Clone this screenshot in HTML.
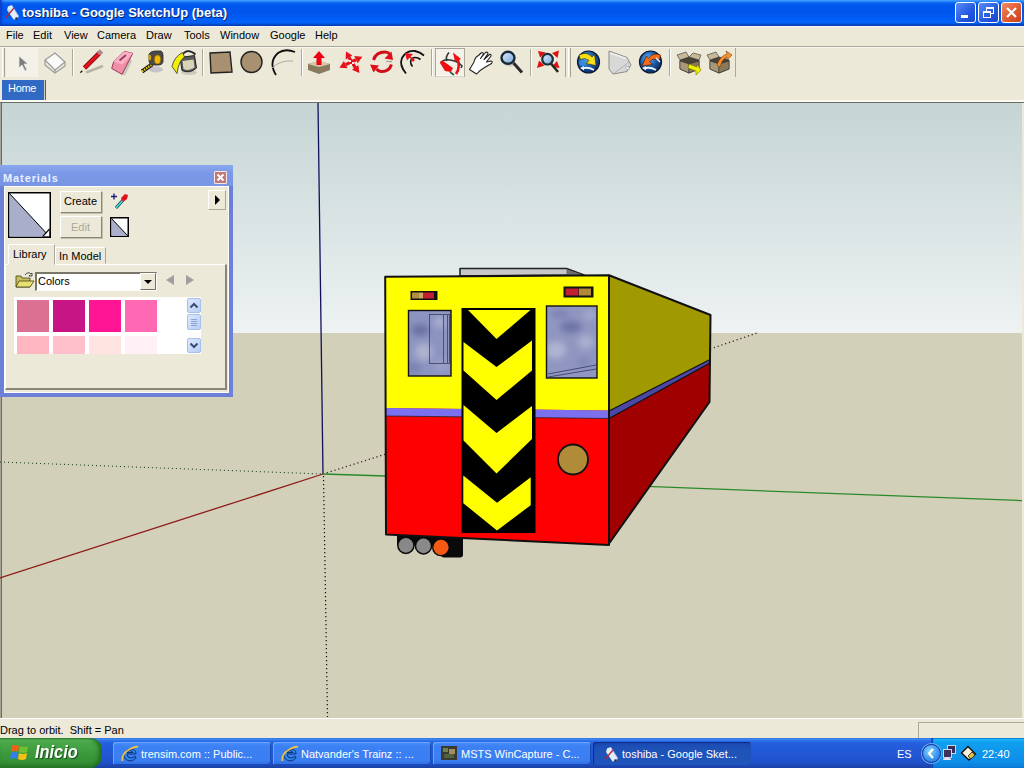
<!DOCTYPE html>
<html><head><meta charset="utf-8">
<style>
*{margin:0;padding:0;box-sizing:border-box}
html,body{width:1024px;height:768px;overflow:hidden;background:#ece9d8;font-family:"Liberation Sans",sans-serif;font-size:11px;color:#000}
.a{position:absolute}
#title{left:0;top:0;width:1024px;height:26px;background:linear-gradient(#3f9bff 0px,#3a93ff 1px,#1a78f8 2px,#0a62ee 3px,#0058ee 5px,#0055ea 12px,#005af2 17px,#0063fa 21px,#0060f6 23px,#0050d8 24px,#0040b0 25.5px,#0038a8 26px)}
#title .t{left:22px;top:5px;color:#fff;font-weight:bold;font-size:13px;white-space:nowrap;text-shadow:1px 1px 0 #0a246a}
.wb{top:2px;width:21px;height:21px;border:1px solid #fff;border-radius:3px;background:linear-gradient(135deg,#5b8ef7,#2358e0 60%,#1a48c8)}
.menu{top:29px;white-space:nowrap}
.sep{width:2px;height:26px;border-left:1px solid #aca899;border-right:1px solid #fff}
</style></head><body>
<div id="title" class="a">
  <div class="a" style="left:0;top:0;width:4px;height:26px;background:linear-gradient(90deg,#0a3cc8,rgba(0,88,238,0))"></div>
  <svg class="a" style="left:3px;top:3px" width="16" height="18" viewBox="0 0 16 18">
    <path d="M5 3.5 L8.5 2 L15.5 13 L14 16 L10.5 16.5 L4 7 Z" fill="#e4ecfa"/>
    <path d="M8.5 2 L15.5 13 L14 16" fill="none" stroke="#a8c0e8" stroke-width="1"/>
    <path d="M4.5 6.5 L8 9.5" stroke="#8aa8e0" stroke-width="1" opacity="0.7"/>
    <path d="M3 14.5 L11 5" stroke="#b02838" stroke-width="1.3"/>
    <circle cx="13.5" cy="15.5" r="1.3" fill="#303040"/>
  </svg>
  <div class="a t">toshiba - Google SketchUp (beta)</div>
  <div class="a wb" style="left:955px"><div class="a" style="left:5px;top:12px;width:7px;height:3px;background:#fff"></div></div>
  <div class="a wb" style="left:978px"><div class="a" style="left:7px;top:4px;width:8px;height:7px;border:1px solid #fff;border-top-width:2px"></div><div class="a" style="left:4px;top:8px;width:8px;height:7px;border:1px solid #fff;border-top-width:2px;background:#2a60e0"></div></div>
  <div class="a wb" style="left:1001px;background:linear-gradient(135deg,#f08a64,#e05a30 55%,#c84020)">
    <svg class="a" style="left:3px;top:3px" width="13" height="13" viewBox="0 0 13 13"><path d="M2 2 L11 11 M11 2 L2 11" stroke="#fff" stroke-width="2.2"/></svg>
  </div>
</div>
<!-- menu -->
<div class="a" style="left:0;top:26px;width:1024px;height:1px;background:#f6f6fa"></div>
<div class="a menu" style="left:6px">File</div>
<div class="a menu" style="left:33px">Edit</div>
<div class="a menu" style="left:64px">View</div>
<div class="a menu" style="left:97px">Camera</div>
<div class="a menu" style="left:146px">Draw</div>
<div class="a menu" style="left:184px">Tools</div>
<div class="a menu" style="left:220px">Window</div>
<div class="a menu" style="left:270px">Google</div>
<div class="a menu" style="left:315px">Help</div>
<div class="a" style="left:0;top:46px;width:1024px;height:1px;background:#aca899"></div>
<div class="a" style="left:0;top:47px;width:1024px;height:1px;background:#f8f6ee"></div>

<!-- toolbar -->
<svg class="a" style="left:0;top:47px" width="1024" height="32" viewBox="0 47 1024 32">
  <defs>
    <radialGradient id="glb" cx="0.4" cy="0.35" r="0.7"><stop offset="0" stop-color="#6ab4f0"/><stop offset="0.5" stop-color="#1c5fb0"/><stop offset="1" stop-color="#0a2050"/></radialGradient>
    <linearGradient id="mag" x1="0" y1="0" x2="1" y2="1"><stop offset="0" stop-color="#d8ecff"/><stop offset="1" stop-color="#7aa8d8"/></linearGradient>
  </defs>
  <!-- grippers -->
  <line x1="2.5" y1="48" x2="2.5" y2="77" stroke="#fff"/>
  <line x1="4.5" y1="48" x2="4.5" y2="77" stroke="#a8a490"/>
  <!-- select (pressed-ish area) -->
  <rect x="6" y="48" width="32" height="29" fill="#f3f1e8"/>
  <path d="M19 56 L19 68 L22 65 L25 71 L27 70 L24 64 L28 64 Z" fill="#7c7c7c" stroke="#e8e8e8" stroke-width="0.8"/>
  <!-- component -->
  <g stroke="#9a9a9a" stroke-width="1.2" fill="none">
    <path d="M45 60 L55 53 L65 62 L55 70 Z" fill="#fafafa"/>
    <path d="M45 60 L45 65 L55 73 L65 66 L65 62"/>
    <path d="M55 70 L55 73"/>
  </g>
  <!-- sep -->
  <line x1="72.5" y1="49" x2="72.5" y2="76" stroke="#aca899"/>
  <line x1="73.5" y1="49" x2="73.5" y2="76" stroke="#fff"/>
  <!-- pencil -->
  <path d="M86 72.5 L103 66" stroke="#aaa69a" stroke-width="2.5" opacity="0.8"/>
  <path d="M84.5 68 L99.5 53" stroke="#801010" stroke-width="4.6"/>
  <path d="M84.5 68 L99.5 53" stroke="#e81020" stroke-width="3"/>
  <path d="M98.5 54 L101.5 51" stroke="#b08888" stroke-width="4.6"/>
  <path d="M79.8 73.3 L82.6 67.4 L85.8 70.4 Z" fill="#f0e4c8"/>
  <path d="M79.8 73.3 L81.2 70.3 L82.8 71.8 Z" fill="#111"/>
  <!-- eraser -->
  <path d="M128 57 L132 61 L125 75.5 L121 74.5 Z" fill="#b0aca4" opacity="0.6"/>
  <path d="M124.4 51.4 L132.8 53.3 L122 74.3 L111.7 68.5 L113.6 61.8 Z" fill="#f090a8" stroke="#903050" stroke-width="0.9" stroke-linejoin="round"/>
  <path d="M113.6 61.8 L124.4 51.4 L132.8 53.3 L122.5 64.5 Z" fill="#ffb0c4"/>
  <path d="M119.5 60.5 L126 55" stroke="#904060" stroke-width="1.8"/>
  <!-- tape -->
  <ellipse cx="156" cy="69.5" rx="7" ry="3" fill="#b8b2c8" opacity="0.7"/>
  <path d="M142 71.5 L152 64.5" stroke="#111" stroke-width="4"/>
  <path d="M142 71.5 L152 64.5" stroke="#e8d020" stroke-width="2.4" stroke-dasharray="1.5 1"/>
  <path d="M149 54 Q151 51 155 51 L161 51 Q163 52 163 55 L163 62 Q162 65 159 65 L152 65 Q149 64 149 61 Z" fill="#4a4a4a" stroke="#2a2a2a" stroke-width="0.8"/>
  <ellipse cx="157.5" cy="59.5" rx="3.2" ry="4.5" fill="#f0b800" stroke="#805000" stroke-width="0.5"/>
  <ellipse cx="149.8" cy="57.5" rx="1.4" ry="3" fill="#d0a000"/>
  <!-- paint bucket -->
  <ellipse cx="189" cy="72.5" rx="8" ry="2.5" fill="#c4c0b4" opacity="0.8"/>
  <path d="M180 57.5 L194.5 55.5 L196.5 68 Q190 74 182 70.5 Z" fill="#5a5a58" stroke="#222" stroke-width="1"/>
  <path d="M182.5 61 L193.5 59.5 L194.5 67.5 Q189 71.5 183.5 69 Z" fill="#d8d4b8"/>
  <path d="M181.5 56 Q187 47 195.5 54.5" fill="none" stroke="#222" stroke-width="1.7"/>
  <path d="M172 66.5 Q174 57 182.5 52.5 L184.5 57 Q178.5 61 177 73.5 Z" fill="#f0f000" stroke="#333" stroke-width="0.8"/>
  <!-- sep -->
  <line x1="202.5" y1="49" x2="202.5" y2="76" stroke="#aca899"/>
  <line x1="203.5" y1="49" x2="203.5" y2="76" stroke="#fff"/>
  <!-- rect -->
  <path d="M210 53 L230 52 L232 72 L211 73 Z" fill="#a89070" stroke="#222" stroke-width="1.4"/>
  <!-- circle -->
  <circle cx="251.5" cy="62" r="10.5" fill="#a89070" stroke="#222" stroke-width="1.4"/>
  <!-- arc -->
  <path d="M276 75 Q268 62 278 53 Q285 48 295 52" fill="none" stroke="#111" stroke-width="1.8"/>
  <path d="M272 68 Q280 60 293 61" fill="none" stroke="#aaa" stroke-width="1"/>
  <!-- sep -->
  <line x1="301.5" y1="49" x2="301.5" y2="76" stroke="#aca899"/>
  <line x1="302.5" y1="49" x2="302.5" y2="76" stroke="#fff"/>
  <!-- push/pull -->
  <path d="M308 64 L319 61 L330 64 L330 70 L319 74 L308 70 Z" fill="#8a7a60"/>
  <path d="M308 64 L319 61 L330 64 L319 67 Z" fill="#d8c8a8"/>
  <path d="M319 51 L325 58 L321.5 58 L321.5 65 L316.5 65 L316.5 58 L313 58 Z" fill="#f00010"/>
  <!-- move -->
  <g fill="#e8101a">
    <path d="M346 51.5 L352.4 55.4 L345.6 59.6 Z"/>
    <path d="M362.3 56.7 L357.7 63.3 L354.3 56.1 Z"/>
    <path d="M339.4 67.7 L347.5 68.2 L343.9 61 Z"/>
    <path d="M359.4 73 L358.4 65 L352 69.8 Z"/>
  </g>
  <path d="M349 57.5 L355.5 68 M356 59.7 L345.7 64.6" stroke="#e8101a" stroke-width="3.2"/>
  <g fill="#fbe8e8"><rect x="349" y="60" width="2" height="2"/><rect x="352" y="62" width="2" height="2"/><rect x="350" y="64" width="2" height="2"/></g>
  <!-- rotate -->
  <path d="M373.5 60 Q376 52 385 52 Q388 52 389.5 54" fill="none" stroke="#d01018" stroke-width="3"/>
  <path d="M393 60 L384.5 58.5 L391.5 51.5 Z" fill="#e01018"/>
  <path d="M386 61 Q390 62 392 61.5" fill="none" stroke="#9a9a9a" stroke-width="1.2"/>
  <path d="M391.5 64.5 Q389 72 381 71.5 Q378 71 376.5 69" fill="none" stroke="#d01018" stroke-width="3"/>
  <path d="M370 64.5 L379 65.5 L373.5 72.5 Z" fill="#e01018"/>
  <!-- offset -->
  <path d="M406 73.5 Q399 65 402 58 Q406 50 415 51 Q420 52 424 55.5" fill="none" stroke="#111" stroke-width="1.8"/>
  <path d="M412.5 66.5 Q409 62 412 58.5 Q416 56 420.5 59.5" fill="none" stroke="#111" stroke-width="1.6"/>
  <path d="M405 53 L413 54 L407 60.5 Z" fill="#e8101a"/><path d="M408 55 L415 60 L413 62 Z" fill="#e8101a"/>
  <!-- sep -->
  <line x1="431.5" y1="49" x2="431.5" y2="76" stroke="#aca899"/>
  <line x1="432.5" y1="49" x2="432.5" y2="76" stroke="#fff"/>
  <!-- orbit pressed -->
  <rect x="435.5" y="48.5" width="29" height="28" fill="#f4f2e8" stroke="#aca899"/>
  <line x1="436" y1="76" x2="464" y2="76" stroke="#fff"/>
  <path d="M449 52.5 Q445 57 447 61" fill="none" stroke="#333" stroke-width="1.6"/>
  <path d="M441 63 Q443 59 450 60 Q458 61 462 66 L461 68" fill="none" stroke="#333" stroke-width="1.5"/>
  <path d="M450 72 L454 75" stroke="#2a6050" stroke-width="1.6"/>
  <path d="M440 63 Q440 60 443 61 L453 68 L451 72 L445 71 Z" fill="#ee1010"/>
  <path d="M456 74 Q461 67 457 57" fill="none" stroke="#ee1010" stroke-width="2.6"/>
  <path d="M453 52.5 L461 59 L455 62 Z" fill="#ee1010"/>
  <!-- pan hand -->
  <path d="M469.5 69.5 L474 62 Q475 57 478.5 55.5 L481 53 Q483 52 483.5 54 L480.5 58.5 L485.5 52.5 Q487.5 51.5 488 53.5 L484 59.5 L489.5 54.5 Q491.5 54 491 56 L486.5 62 L491 61 Q493 61.5 491.5 63.5 L484.5 67.5 Q479.5 70.5 476.5 74 Z" fill="#fff" stroke="#222" stroke-width="1.1" stroke-linejoin="round"/>
  <!-- zoom -->
  <ellipse cx="510" cy="64" rx="6" ry="2.5" fill="#c8c4b4" opacity="0.7"/>
  <line x1="513.5" y1="63" x2="522" y2="72.5" stroke="#2a2a2a" stroke-width="3"/>
  <ellipse cx="508" cy="57.8" rx="6.5" ry="6" fill="url(#mag)" stroke="#1a2a38" stroke-width="2.4"/>
  <!-- sep -->
  <line x1="530.5" y1="49" x2="530.5" y2="76" stroke="#aca899"/>
  <line x1="531.5" y1="49" x2="531.5" y2="76" stroke="#fff"/>
  <!-- zoom extents -->
  <g fill="#e01010"><path d="M538 51 L546 52.5 L540 57.5 Z"/><path d="M559 50.5 L557.5 58 L552 53 Z"/><path d="M537 68 L539 60.5 L544.5 65.5 Z"/><path d="M559.5 68 L551.5 67 L557 61 Z"/></g>
  <line x1="551" y1="63.5" x2="558" y2="72" stroke="#2a2a2a" stroke-width="2.6"/>
  <circle cx="547.5" cy="59.2" r="5.3" fill="url(#mag)" stroke="#1a3038" stroke-width="2.2"/>
  <!-- end toolbar 1 -->
  <line x1="565.5" y1="48" x2="565.5" y2="77" stroke="#aca899"/>
  <line x1="568.5" y1="48" x2="568.5" y2="77" stroke="#fff"/>
  <line x1="570.5" y1="48" x2="570.5" y2="77" stroke="#a8a490"/>
  <!-- globe 1 -->
  <circle cx="588.5" cy="62" r="11" fill="url(#glb)" stroke="#0a1830" stroke-width="1.2"/>
  <ellipse cx="583" cy="63" rx="4" ry="3" fill="#3a90e0" opacity="0.8"/>
  <path d="M579 55 Q587 51 592 57 L594.5 54.5 L596 65.5 L586 63.5 L589 60.5 Q585 57 580.5 59.5 Z" fill="#f8e010" stroke="#302800" stroke-width="0.6"/>
  <path d="M582 68.5 Q588 66.5 594 70" stroke="#e8f4ff" stroke-width="1.8" fill="none"/>
  <path d="M580 68 L584 66 L584 70.5 Z" fill="#e8f4ff"/>
  <!-- share sheet -->
  <path d="M609 51 L627 57.5 L631 65 L627 71.5 L613 74 L609 69 Z" fill="#d8d8d8" stroke="#8a8a8a" stroke-width="1"/>
  <path d="M613 74 L629 62" stroke="#a8a8a8" stroke-width="0.8"/>
  <path d="M610 53 L626 58.5" stroke="#f0f0f0" stroke-width="1.5"/>
  <rect x="626" y="66.5" width="3" height="3" fill="#f4f4f4" stroke="#999" stroke-width="0.6"/>
  <!-- globe 2 -->
  <circle cx="650.5" cy="62" r="11" fill="url(#glb)" stroke="#0a1830" stroke-width="1.2"/>
  <path d="M660.5 55 Q653 52 648.5 58.5 L646.5 56 L642 66 L652.5 64.5 L649.5 61.5 Q653.5 57.5 659.5 60 Z" fill="#f86a18" stroke="#401800" stroke-width="0.6"/>
  <path d="M656 58 L660 62" stroke="#f0f8ff" stroke-width="1.4"/>
  <path d="M644 68.5 Q650 66.5 656 70" stroke="#e8f4ff" stroke-width="1.8" fill="none"/>
  <path d="M642 68 L646 66 L646 70.5 Z" fill="#e8f4ff"/>
  <!-- sep -->
  <line x1="669.5" y1="49" x2="669.5" y2="76" stroke="#aca899"/>
  <line x1="670.5" y1="49" x2="670.5" y2="76" stroke="#fff"/>
  <!-- box 1 -->
  <path d="M680 60 L689 57 L699 60 L699 69 L689 73 L680 69 Z" fill="#4a4232" stroke="#333" stroke-width="0.8"/><path d="M680 61 L689 64 L689 73 L680 69 Z" fill="#a89878" stroke="#333" stroke-width="0.6"/><path d="M689 64 L699 61 L699 69 L689 73 Z" fill="#8a7a5a" stroke="#333" stroke-width="0.6"/>
  <path d="M677 55 L686 52 L689 57 L680 60 Z" fill="#c8b898" stroke="#333" stroke-width="0.6"/>
  <path d="M689 57 L693 53 L701 55 L699 60 Z" fill="#c8b898" stroke="#333" stroke-width="0.6"/>
  <path d="M689 64 L697 67 L697 64 L701 70 L696 75 L696 71 L688 68 Z" fill="#f0f000" stroke="#707000" stroke-width="0.6"/>
  <!-- box 2 -->
  <path d="M710 60 L719 57 L729 60 L729 69 L719 73 L710 69 Z" fill="#4a4232" stroke="#333" stroke-width="0.8"/><path d="M710 61 L719 64 L719 73 L710 69 Z" fill="#a89878" stroke="#333" stroke-width="0.6"/><path d="M719 64 L729 61 L729 69 L719 73 Z" fill="#8a7a5a" stroke="#333" stroke-width="0.6"/>
  <path d="M707 55 L716 52 L719 57 L710 60 Z" fill="#c8b898" stroke="#333" stroke-width="0.6"/>
  <path d="M717 65 Q720 56 727 54 L726 51 L732 55 L727 60 L727 57 Q722 59 720 67 Z" fill="#f89030" stroke="#804000" stroke-width="0.6"/>
  <!-- end -->
  <line x1="735.5" y1="48" x2="735.5" y2="77" stroke="#aca899"/>
</svg>
<!-- Home tab bar -->
<div class="a" style="left:2px;top:80px;width:42px;height:20px;background:#316ac5;box-shadow:1px 0 0 #d0ccc0,2px 0 0 #5e5c54,2px 1px 0 #5e5c54"></div>
<div class="a" style="left:8px;top:82px;color:#fff;font-size:11px;letter-spacing:-0.3px">Home</div>
<div class="a" style="left:0;top:100px;width:1024px;height:2px;background:#fafaf2"></div>
<div class="a" style="left:0;top:102px;width:1024px;height:1px;background:#6b6f68"></div>

<!-- viewport -->
<svg class="a" style="left:0;top:103px" width="1024" height="616" viewBox="0 103 1024 616">
  <defs>
    <filter id="blur3" x="-20%" y="-20%" width="140%" height="140%"><feGaussianBlur stdDeviation="3"/></filter>
    <clipPath id="cw1"><rect x="409" y="311" width="41.5" height="64.5"/></clipPath>
    <clipPath id="cw2"><rect x="547" y="306.5" width="49.5" height="71"/></clipPath>
    <linearGradient id="sky" x1="0" y1="0" x2="0" y2="1"><stop offset="0" stop-color="#c5d5d4"/><stop offset="1" stop-color="#eef2f3"/></linearGradient>
    <linearGradient id="glass" x1="0" y1="0" x2="0.6" y2="1"><stop offset="0" stop-color="#8a92c0"/><stop offset="0.25" stop-color="#7880b0"/><stop offset="0.5" stop-color="#a2a8cc"/><stop offset="0.8" stop-color="#8c92bc"/><stop offset="1" stop-color="#9aa0c8"/></linearGradient>
    <linearGradient id="glass2" x1="0" y1="0" x2="0.5" y2="1"><stop offset="0" stop-color="#8890c0"/><stop offset="0.3" stop-color="#a8b0d0"/><stop offset="0.55" stop-color="#8e96c0"/><stop offset="0.8" stop-color="#b0b6d4"/><stop offset="1" stop-color="#9098c4"/></linearGradient>
  </defs>
  <rect x="0" y="103" width="1022" height="230" fill="url(#sky)"/>
  <rect x="0" y="333" width="1022" height="385" fill="#d2d0b9"/>
  <rect x="0" y="103" width="1" height="615" fill="#a8a498"/><rect x="1" y="103" width="1" height="615" fill="#6b6b60"/>
  <rect x="1022" y="103" width="2" height="615" fill="#ece9d8"/>
  <!-- axes -->
  <line x1="318" y1="103" x2="323" y2="474" stroke="#10105e" stroke-width="1.3"/>
  <line x1="323.5" y1="476" x2="327.5" y2="717" stroke="#111" stroke-width="1.2" stroke-dasharray="1.2 2.8"/>
  <line x1="0" y1="578" x2="323" y2="474" stroke="#8e1a1a" stroke-width="1.3"/>
  <line x1="323" y1="474" x2="386" y2="454" stroke="#3a2222" stroke-width="1.3" stroke-dasharray="1.2 2.8"/>
  <line x1="710" y1="349" x2="757" y2="333" stroke="#3a2222" stroke-width="1.3" stroke-dasharray="1.2 2.8"/>
  <line x1="0" y1="462" x2="323" y2="474" stroke="#2a4a2a" stroke-width="1.1" stroke-dasharray="1.1 2.9"/>
  <line x1="323" y1="474" x2="386" y2="476" stroke="#2a8a2a" stroke-width="1.3"/>
  <line x1="640" y1="486.2" x2="1022" y2="500.6" stroke="#2a8a2a" stroke-width="1.3"/>
  <!-- bumpers -->
  <path d="M397 535 L463 537 L463 546 L397 545 Z" fill="#0a0a0a"/>
  <rect x="441" y="537" width="22" height="20.5" rx="3" fill="#0a0a0a"/>
  <circle cx="405.9" cy="545.4" r="8.8" fill="#0a0a0a"/>
  <circle cx="423.5" cy="545.9" r="8.8" fill="#0a0a0a"/>
  <circle cx="441" cy="547.3" r="9" fill="#0a0a0a"/>
  <circle cx="405.9" cy="545.4" r="7.3" fill="#888888"/>
  <circle cx="423.5" cy="545.9" r="7.3" fill="#8a8a8a"/>
  <circle cx="441" cy="547.3" r="7.6" fill="#f55a14"/>
  <!-- roof -->
  <path d="M460 276 L460 268.5 L566.5 268.5 L584 275 Z" fill="#c8c8c8" stroke="#222" stroke-width="1.6" stroke-linejoin="round"/>
  <path d="M566.5 269.5 L582 274.5 L566.5 275.5 Z" fill="#6e6e72"/>
  <!-- side face -->
  <path d="M609 275.3 L710.5 315 L709.5 402 L608 545 Z" fill="#a00000"/>
  <path d="M609 275.3 L710.5 315 L710 360 L609 411 Z" fill="#a09a00"/>
  <path d="M609 411 L710 359.5 L710 363 L609 418.5 Z" fill="#4c48a8"/>
  <path d="M609 275.3 L710.5 315 L709.5 402 L608 545" fill="none" stroke="#111" stroke-width="2" stroke-linejoin="round"/>
  <line x1="609" y1="418.5" x2="710" y2="363" stroke="#111" stroke-width="1.1"/>
  <line x1="609" y1="411" x2="710" y2="359.5" stroke="#111" stroke-width="1.1"/>
  <!-- front face -->
  <path d="M385 276.8 L609 275.3 L609 545 L386 534.5 Z" fill="#ff0000"/>
  <path d="M385 276.8 L609 275.3 L609 410.5 L386 408 Z" fill="#ffff00"/>
  <path d="M386 408 L609 410.5 L609 418.5 L386 416 Z" fill="#7a70f0"/>
  <line x1="386" y1="416" x2="609" y2="418.5" stroke="#222" stroke-width="0.8"/>
  <path d="M385.2 276.8 L609 275.3 L609 545 L386 534.5 Z" fill="none" stroke="#111" stroke-width="2" stroke-linejoin="round"/>
  <!-- taillights -->
  <rect x="410.5" y="291" width="27" height="9" fill="#111"/>
  <rect x="412" y="292.5" width="7" height="6" fill="#b09040"/><rect x="419" y="292.5" width="4" height="6" fill="#c8a860"/><rect x="423" y="292.5" width="11" height="6" fill="#c02030"/>
  <rect x="563.5" y="286.5" width="30" height="11" fill="#111"/>
  <rect x="565.5" y="288.5" width="13" height="7" fill="#c02030"/><rect x="579" y="288.5" width="12" height="7" fill="#b08838"/>
  <!-- windows -->
  <rect x="408.5" y="310.5" width="42.5" height="65.5" fill="#8c94c0"/>
  <g clip-path="url(#cw1)" filter="url(#blur3)">
    <ellipse cx="420" cy="330" rx="9" ry="6" fill="#6a72a4"/>
    <ellipse cx="424" cy="352" rx="9" ry="9" fill="#aeb2d0"/>
    <ellipse cx="414" cy="368" rx="7" ry="5" fill="#7880b0"/>
    <ellipse cx="440" cy="322" rx="6" ry="6" fill="#a8aed0"/>
    <ellipse cx="442" cy="365" rx="8" ry="6" fill="#9aa0c8"/>
  </g>
  <rect x="408.5" y="310.5" width="42.5" height="65.5" fill="none" stroke="#111" stroke-width="1.4"/>
  <rect x="429.5" y="314.5" width="20" height="49" fill="none" stroke="#3a4060" stroke-width="0.8"/>
  <line x1="443.5" y1="315" x2="443.5" y2="363" stroke="#3a4060" stroke-width="0.8"/><line x1="447.5" y1="315" x2="447.5" y2="363" stroke="#3a4060" stroke-width="0.8"/>
  <rect x="546.5" y="306" width="50.5" height="72" fill="#9096c0"/>
  <g clip-path="url(#cw2)" filter="url(#blur3)">
    <ellipse cx="571" cy="327" rx="11" ry="6" fill="#6c74a6"/>
    <ellipse cx="560" cy="314" rx="9" ry="4" fill="#7a82b2"/>
    <ellipse cx="556" cy="350" rx="10" ry="9" fill="#b0b4d2"/>
    <ellipse cx="586" cy="342" rx="8" ry="7" fill="#aab0d0"/>
    <ellipse cx="584" cy="362" rx="7" ry="5" fill="#8088b6"/>
    <ellipse cx="590" cy="315" rx="6" ry="5" fill="#a4aad0"/>
  </g>
  <rect x="546.5" y="306" width="50.5" height="72" fill="none" stroke="#111" stroke-width="1.4"/>
  <line x1="548" y1="374" x2="596" y2="365" stroke="#303860" stroke-width="0.8"/>
  <line x1="548" y1="377" x2="596" y2="369" stroke="#303860" stroke-width="0.8"/>
  <!-- round -->
  <circle cx="573" cy="459.5" r="15" fill="#b08c38" stroke="#111" stroke-width="1.8"/>
  <!-- chevron door -->
  <rect x="461.5" y="308" width="74" height="225" fill="#000"/>
  <g fill="#ffff00">
    <path d="M468 310 L530.5 310 L496.5 339 Z"/>
    <path d="M463.5 342 L496.5 367 L532 340.5 L532 370.5 L496.5 400 L463.5 370.5 Z"/>
    <path d="M463.5 405 L496.5 433 L532 406 L532 439 L496.5 473.5 L463.5 440.5 Z"/>
    <path d="M463.3 475.4 L497 502.7 L530.7 477.3 L530.7 505.2 L497 530.5 L463.3 503.2 Z"/>
  </g>
</svg>

<!-- Materials panel -->
<div class="a" style="left:0;top:165px;width:233px;height:232px;background:#6c80d8;border-radius:2px 2px 0 0"></div>
<div class="a" style="left:0;top:165px;width:233px;height:21px;background:linear-gradient(#8aa8ee,#7a98e6 40%,#7896e4)"></div>
<div class="a" style="left:3px;top:172px;color:#e8f0ff;font-weight:bold;font-size:11px;letter-spacing:0.9px">Materials</div>
<div class="a" style="left:214px;top:171px;width:13px;height:13px;background:#c07878;border:1px solid #f4e8e8;border-radius:1px"></div>
<svg class="a" style="left:214px;top:171px" width="13" height="13" viewBox="0 0 13 13"><path d="M3.5 3.5 L9.5 9.5 M9.5 3.5 L3.5 9.5" stroke="#fff" stroke-width="2"/></svg>
<div class="a" style="left:4px;top:186px;width:225px;height:207px;background:#ece9d8;border-top:1px solid #fff;border-left:1px solid #fff;border-right:1px solid #fff;border-bottom:1px solid #fff"></div>
<!-- swatch preview -->
<svg class="a" style="left:8px;top:192px" width="43" height="46" viewBox="0 0 43 46">
  <rect x="0.75" y="0.75" width="41.5" height="44.5" fill="#fff" stroke="#000" stroke-width="1.5"/>
  <path d="M1.5 1.5 L41.5 44.5 L1.5 44.5 Z" fill="#a9aecb"/>
  <path d="M1.5 1.5 L41.5 44.5" stroke="#000" stroke-width="1"/>
  <path d="M34 44.5 L41.5 36 L41.5 44.5 Z" fill="#000"/><path d="M36 44 L41 38.5 L41 44 Z" fill="#fff"/>
</svg>
<!-- buttons -->
<div class="a" style="left:60px;top:191px;width:42px;height:22px;background:#ece9d8;border:1px solid;border-color:#fff #8a8778 #8a8778 #fff;box-shadow:1px 1px 0 #c4c0b0"></div>
<div class="a" style="left:64px;top:195px;font-size:11px">Create</div>
<div class="a" style="left:60px;top:216px;width:42px;height:22px;background:#ece9d8;border:1px solid;border-color:#fff #8a8778 #8a8778 #fff;box-shadow:1px 1px 0 #c4c0b0"></div>
<div class="a" style="left:71px;top:221px;font-size:11px;color:#aca899">Edit</div>
<!-- eyedropper -->
<svg class="a" style="left:110px;top:192px" width="20" height="18" viewBox="0 0 20 18">
  <path d="M1 4.5 H7 M4 1.5 V7.5" stroke="#1a1a80" stroke-width="1.3"/>
  <path d="M6 16 L13 8" stroke="#104040" stroke-width="3"/>
  <path d="M6 16 L13 8" stroke="#40e0e0" stroke-width="1.6"/>
  <path d="M11 6 L15 2 L18 3 L17 7 L13 10 Z" fill="#e01020"/>
</svg>
<!-- small swatch -->
<svg class="a" style="left:110px;top:217px" width="19" height="20" viewBox="0 0 19 20">
  <rect x="0.75" y="0.75" width="17.5" height="18.5" fill="#fff" stroke="#000" stroke-width="1.5"/>
  <path d="M1.5 1.5 L18 19 L1.5 19 Z" fill="#a9aecb"/><path d="M1.5 1.5 L18 19" stroke="#000" stroke-width="1"/>
</svg>
<!-- arrow btn -->
<div class="a" style="left:208px;top:190px;width:18px;height:20px;background:#ece9d8;border:1px solid;border-color:#fff #aca899 #aca899 #fff"></div>
<svg class="a" style="left:208px;top:190px" width="18" height="20"><path d="M7 5 L12 10 L7 15 Z" fill="#000"/></svg>
<!-- tabs -->
<div class="a" style="left:5px;top:264px;width:222px;height:126px;border-style:solid;border-width:1px 2px 2px 1px;border-color:#fff #8a8778 #8a8778 #fff;background:#ece9d8"></div>
<div class="a" style="left:8px;top:244px;width:47px;height:21px;background:#ece9d8;border:1px solid;border-color:#fff #aca899 transparent #fff;border-radius:2px 2px 0 0"></div>
<div class="a" style="left:13px;top:248px;font-size:11px">Library</div>
<div class="a" style="left:55px;top:247px;width:51px;height:17px;background:#ece9d8;border:1px solid;border-color:#fff #aca899 transparent #fff"></div>
<div class="a" style="left:59px;top:250px;font-size:11px">In Model</div>
<!-- folder -->
<svg class="a" style="left:15px;top:271px" width="20" height="18" viewBox="0 0 20 18">
  <path d="M1 5 L1 16 L15 16 L15 7 L7 7 L6 5 Z" fill="#c8c060" stroke="#404010" stroke-width="0.8"/>
  <path d="M1 16 L4 10 L19 10 L15 16 Z" fill="#e8e070" stroke="#404010" stroke-width="0.8"/>
  <path d="M10 4 Q13 0 16 3 L17 2 L17 5 L14 5 L15 4" fill="none" stroke="#222" stroke-width="0.8"/>
</svg>
<!-- dropdown -->
<div class="a" style="left:35px;top:272px;width:122px;height:19px;background:#fff;border-style:solid;border-width:2px 1px 1px 2px;border-color:#7a7668 #fff #fff #7a7668"></div>
<div class="a" style="left:38px;top:275px;font-size:11px">Colors</div>
<div class="a" style="left:140px;top:273px;width:16px;height:17px;background:#ece9d8;border:1px solid;border-color:#fff #716f64 #716f64 #fff"></div>
<svg class="a" style="left:140px;top:273px" width="16" height="17"><path d="M4 7 L12 7 L8 11 Z" fill="#000"/></svg>
<!-- nav arrows -->
<svg class="a" style="left:163px;top:273px" width="34" height="14" viewBox="0 0 34 14"><path d="M3 7 L11 2 L11 12 Z" fill="#a0a0a0"/><path d="M31 7 L23 2 L23 12 Z" fill="#a0a0a0"/></svg>
<!-- swatch grid -->
<div class="a" style="left:14px;top:297px;width:173px;height:57px;background:#fff"></div>
<div class="a" style="left:17px;top:300px;width:32px;height:32px;background:#db7093"></div>
<div class="a" style="left:53px;top:300px;width:32px;height:32px;background:#c71585"></div>
<div class="a" style="left:89px;top:300px;width:32px;height:32px;background:#ff1493"></div>
<div class="a" style="left:125px;top:300px;width:32px;height:32px;background:#ff69b4"></div>
<div class="a" style="left:17px;top:336px;width:32px;height:18px;background:#ffb6c1"></div>
<div class="a" style="left:53px;top:336px;width:32px;height:18px;background:#ffc0cb"></div>
<div class="a" style="left:89px;top:336px;width:32px;height:18px;background:#ffe4e1"></div>
<div class="a" style="left:125px;top:336px;width:32px;height:18px;background:#fff0f5"></div>
<!-- scrollbar -->
<div class="a" style="left:186px;top:297px;width:15px;height:57px;background:#fdfdfb"></div>
<div class="a" style="left:187px;top:298px;width:14px;height:15px;background:linear-gradient(135deg,#dce8fc,#b8cef6);border:1px solid #a8c0ec;border-radius:2px"></div>
<svg class="a" style="left:187px;top:298px" width="14" height="15"><path d="M3.5 9.5 L7 6 L10.5 9.5" fill="none" stroke="#3a4a78" stroke-width="2"/></svg>
<div class="a" style="left:187px;top:314px;width:14px;height:16px;background:linear-gradient(135deg,#dce8fc,#b8cef6);border:1px solid #a8c0ec;border-radius:2px"></div>
<svg class="a" style="left:187px;top:314px" width="14" height="16"><path d="M4 5.5 H10 M4 7.5 H10 M4 9.5 H10 M4 11.5 H10" stroke="#8aa4d8" stroke-width="1"/></svg>
<div class="a" style="left:187px;top:338px;width:14px;height:15px;background:linear-gradient(135deg,#dce8fc,#b8cef6);border:1px solid #a8c0ec;border-radius:2px"></div>
<svg class="a" style="left:187px;top:338px" width="14" height="15"><path d="M3.5 5.5 L7 9 L10.5 5.5" fill="none" stroke="#3a4a78" stroke-width="2"/></svg>

<!-- status bar -->
<div class="a" style="left:0;top:718px;width:1024px;height:1px;background:#fff"></div>
<div class="a" style="left:0px;top:724px;white-space:nowrap">Drag to orbit.&nbsp;&nbsp;Shift = Pan</div>
<div class="a" style="left:918px;top:722px;width:106px;height:16px;border-top:1px solid #aca899;border-left:1px solid #aca899"></div>

<!-- taskbar -->
<div class="a" style="left:0;top:738px;width:1024px;height:30px;background:linear-gradient(#3168d5 0px,#3f8cf3 1px,#2a6ae8 3px,#245edb 6px,#2257d5 50%,#1f51cc 80%,#1941a5 100%)"></div>
<div class="a" style="left:0;top:738px;width:102px;height:30px;border-radius:0 12px 12px 0;background:linear-gradient(#3c8f3c 0px,#5cb85c 2px,#48a848 5px,#3c9a3c 50%,#359035 80%,#2a7a2a 100%);box-shadow:inset -3px 0 4px #1e6a1e"></div>
<svg class="a" style="left:10px;top:744px" width="20" height="17" viewBox="0 0 20 17">
  <path d="M2 2 Q5 0 9 2 L8 8 Q5 6 1 8 Z" fill="#f06018"/>
  <path d="M10 2 Q14 4 18 2 L17 8 Q13 10 9 8 Z" fill="#70c030"/>
  <path d="M1 9 Q5 7 8 9 L7 15 Q4 13 0 15 Z" fill="#3080f0"/>
  <path d="M9 9 Q13 11 17 9 L16 15 Q12 17 8 15 Z" fill="#f8c010"/>
</svg>
<div class="a" style="left:35px;top:742px;color:#fff;font-size:18px;font-weight:bold;font-style:italic;transform:scaleX(0.91);transform-origin:0 0;text-shadow:1px 1px 1px #1a4a1a;white-space:nowrap">Inicio</div>
<!-- task buttons -->
<div class="a" style="left:113px;top:742px;width:158px;height:23px;border-radius:3px;background:linear-gradient(#4a8ef8,#3c81f3 20%,#3a7ef2 80%,#2e6ce0);box-shadow:inset 1px 1px 0 #6aa6ff,inset -1px -1px 0 #1a4ab8"></div>
<div class="a" style="left:273px;top:742px;width:158px;height:23px;border-radius:3px;background:linear-gradient(#4a8ef8,#3c81f3 20%,#3a7ef2 80%,#2e6ce0);box-shadow:inset 1px 1px 0 #6aa6ff,inset -1px -1px 0 #1a4ab8"></div>
<div class="a" style="left:433px;top:742px;width:158px;height:23px;border-radius:3px;background:linear-gradient(#4a8ef8,#3c81f3 20%,#3a7ef2 80%,#2e6ce0);box-shadow:inset 1px 1px 0 #6aa6ff,inset -1px -1px 0 #1a4ab8"></div>
<div class="a" style="left:593px;top:742px;width:158px;height:23px;border-radius:3px;background:linear-gradient(#1a48b0,#1e52b7 30%,#1f55bc);box-shadow:inset 1px 1px 1px #0c2c80"></div>
<svg class="a" style="left:121px;top:745px" width="18" height="18" viewBox="0 0 18 18">
  <path d="M3 10 Q4 4 10 4 Q15 4 15 9 L6 9 Q6 13 10 13 Q12 13 14 11 L15 13 Q12 16 9 16 Q3 15 3 10 Z M6 7.5 L12 7.5 Q11 5.5 9 5.5 Q7 5.5 6 7.5 Z" fill="#2a88e8" stroke="#0a2a70" stroke-width="0.9"/>
  <path d="M1.5 16 Q0 9 9 4 Q15 1 17 2" fill="none" stroke="#f0c040" stroke-width="1.8"/>
</svg>
<svg class="a" style="left:281px;top:745px" width="18" height="18" viewBox="0 0 18 18">
  <path d="M3 10 Q4 4 10 4 Q15 4 15 9 L6 9 Q6 13 10 13 Q12 13 14 11 L15 13 Q12 16 9 16 Q3 15 3 10 Z M6 7.5 L12 7.5 Q11 5.5 9 5.5 Q7 5.5 6 7.5 Z" fill="#2a88e8" stroke="#0a2a70" stroke-width="0.9"/>
  <path d="M1.5 16 Q0 9 9 4 Q15 1 17 2" fill="none" stroke="#f0c040" stroke-width="1.8"/>
</svg>
<svg class="a" style="left:441px;top:745px" width="16" height="16" viewBox="0 0 16 16">
  <rect x="0" y="1" width="16" height="14" fill="#3a3a30"/><rect x="2" y="3" width="5" height="4" fill="#708050"/><rect x="8" y="4" width="6" height="5" fill="#a09060"/><rect x="3" y="9" width="10" height="4" fill="#506040"/>
</svg>
<svg class="a" style="left:602px;top:745px" width="16" height="18" viewBox="0 0 16 18">
    <path d="M5 3.5 L8.5 2 L15.5 13 L14 16 L10.5 16.5 L4 7 Z" fill="#e4ecfa"/>
    <path d="M8.5 2 L15.5 13 L14 16" fill="none" stroke="#a8c0e8" stroke-width="1"/>
    <path d="M3 14.5 L11 5" stroke="#b02838" stroke-width="1.3"/>
    <circle cx="13.5" cy="15.5" r="1.3" fill="#303040"/>
  </svg>
<div class="a" style="left:141px;top:748px;color:#fff;font-size:11px;white-space:nowrap">trensim.com :: Public...</div>
<div class="a" style="left:301px;top:748px;color:#fff;font-size:11px;white-space:nowrap">Natvander's Trainz :: ...</div>
<div class="a" style="left:461px;top:748px;color:#fff;font-size:11px;white-space:nowrap">MSTS WinCapture - C...</div>
<div class="a" style="left:622px;top:748px;color:#fff;font-size:11px;white-space:nowrap">toshiba - Google Sket...</div>
<div class="a" style="left:897px;top:748px;color:#fff;font-size:11px">ES</div>
<!-- tray -->
<div class="a" style="left:931px;top:738px;width:93px;height:30px;background:linear-gradient(#0c59b9 0px,#18bbff 1px,#10a0f0 4px,#0f95ec 50%,#0d8ee8 80%,#0b7ad8 100%);border-left:1px solid #095bc9;box-shadow:inset 1px 0 1px #1042af"></div>
<div class="a" style="left:922px;top:744px;width:19px;height:19px;border-radius:50%;background:radial-gradient(circle at 40% 35%,#8ad4ff,#3a94f0 55%,#1a6ad8);border:1px solid #1a3a98;box-shadow:0 0 0 1px #6ab0f8"></div>
<svg class="a" style="left:922px;top:744px" width="19" height="19"><path d="M11 5 L7 9.5 L11 14" fill="none" stroke="#fff" stroke-width="2.2"/></svg>
<svg class="a" style="left:941px;top:744px" width="16" height="17" viewBox="0 0 16 17">
  <rect x="6.5" y="1.5" width="8" height="8" fill="#382c58" stroke="#c8d8f0" stroke-width="1"/><rect x="2.5" y="5.5" width="8" height="8" fill="#40305c" stroke="#c8d8f0" stroke-width="1"/><path d="M2 15 Q6 12 10 15 L10 16 L2 16 Z" fill="#f0e0f0"/>
</svg>
<svg class="a" style="left:960px;top:744px" width="17" height="17" viewBox="0 0 17 17">
  <path d="M1.5 9 L8 2.5 L15.5 10 L9 16 Z" fill="#f8f0d8" stroke="#111" stroke-width="1.4"/><path d="M8 12 L12 8 L15 11 L11 15 Z" fill="#d8c040" stroke="#222" stroke-width="0.8"/>
</svg>
<div class="a" style="left:982px;top:748px;color:#fff;font-size:11px">22:40</div>

</body></html>
